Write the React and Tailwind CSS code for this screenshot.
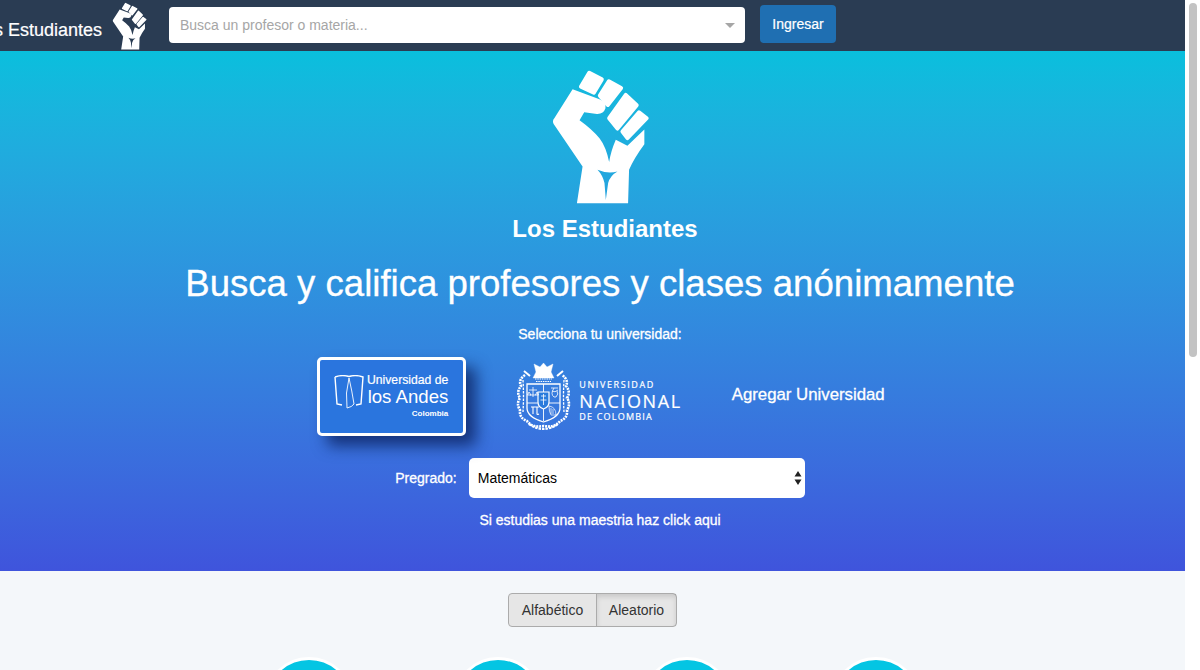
const FIST = "M215 103 L296 133 Q318 142 314 160 Q308 178 288 177 L250 172 L236 196 Q272 222 296 250 Q316 276 325 322 Q330 290 345 255 L380 273 L431 224 L431 268 Q400 310 385 345 L382 446 L228 446 L245 335 L158 207 Q153 198 160 190 Z M290 345 Q320 358 350 350 Q328 362 322 385 L315 436 L311 385 Q306 362 290 345 Z";

function Fist({ className }) {
  return (
    <svg viewBox="150 40 298 410" className={className} fill="white">
      <path d={FIST} fillRule="evenodd" />
      <g stroke="white" strokeWidth="12" strokeLinejoin="round">
        <polygon points="265,53 303,73 279,113 240,95" />
        <polygon points="324,79 361,99 321,150 297,122" />
        <polygon points="375,120 408,151 350,221 325,190" />
        <polygon points="415,172 438,190 380,250 365,230" />
      </g>
    </svg>
  );
}

function Crest() {
  return (
    <svg viewBox="0 0 55 70" className="w-[55px] h-[70px] shrink-0" fill="none" stroke="white">
      <path d="M27.5 1 L31 5 L37 2 L35 10 L38 16 H17 L20 10 L18 2 L24 5 Z" fill="white" strokeWidth="0.4" />
      <path d="M19 17 H36 M20 19.5 H35" strokeWidth="1.2" strokeDasharray="1.5 0.8" />
      <path d="M11 22 H44 V46 Q44 55 27.5 60 Q11 55 11 46 Z" strokeWidth="1.3" />
      <path d="M27.5 22 V59 M11 41 H44" strokeWidth="0.9" />
      <path d="M22 30 H33 V40 Q33 45 27.5 47 Q22 45 22 40 Z" fill="#2a7bdc" strokeWidth="1.2" />
      <path d="M25 34 H30 M27.5 32 V43 M24.5 38 H30.5" strokeWidth="0.8" />
      <path d="M13 28 H21 M17 25 V35 M14 33 H20 M13 30 L11.5 33 H15 Z M21 30 L19.5 33 H22.5 Z" strokeWidth="0.8" />
      <path d="M35 26 H42 M38 26 Q34 32 38 35 H40 Q43 32 41 29 M36 29 Q39 31 42 28" strokeWidth="0.8" />
      <path d="M15 45 H23 M17 45 V52 M21 45 V52 Q21 53 23 52" strokeWidth="1.1" />
      <path d="M33 44 Q40 45 40 53 H35 Q33 50 33 44 Z M35 46 V52 M37 47 V52" strokeWidth="0.7" />
      <path d="M9 13 Q2 18 5 24 Q0 30 4 36 Q0 42 4 48 Q3 56 11 59 Q16 66 27.5 64 Q39 66 44 59 Q52 56 51 48 Q55 42 51 36 Q55 30 50 24 Q53 18 46 13" strokeWidth="2.6" strokeDasharray="2 0.9" />
      <path d="M7 18 Q8 34 7 50 M48 18 Q47 34 48 50" strokeWidth="1.3" strokeDasharray="2.5 1.2" />
      <path d="M13 62 Q27.5 72 42 62" strokeWidth="2.2" strokeDasharray="2.5 1" />
      <path d="M8 9 L14 14 M47 9 L41 14" strokeWidth="2" />
    </svg>
  );
}

function Avatar() {
  return <div className="w-[90px] h-[90px] rounded-full bg-[#04c5e3] border-[3px] border-white shrink-0" />;
}

export default function App() {
  return (
    <div className="w-[1200px] h-[670px] overflow-hidden flex font-['Liberation_Sans',Arial,sans-serif]">
      <main className="w-[1185px] shrink-0 flex flex-col">
        <nav className="h-[51px] bg-[#2a3c53] flex items-start shrink-0 overflow-hidden">
          <span className="ml-[-26px] mt-[20px] text-white text-[18px] leading-[21px] whitespace-nowrap w-[129px] shrink-0 [-webkit-text-stroke:0.2px_white]">Los Estudiantes</span>
          <Fist className="w-[35px] h-[48px] mt-[2px] ml-[9px] shrink-0" />
          <div className="ml-[22px] mt-[7px] w-[576px] h-[36px] bg-white rounded-[4px] flex items-center justify-between pl-[11px] pr-[10px] shrink-0">
            <span className="text-[14px] text-[#a6a6a6]">Busca un profesor o materia...</span>
            <span className="w-0 h-0 border-x-[5px] border-x-transparent border-t-[5px] border-t-[#a6a6a6]" />
          </div>
          <button className="ml-[15px] mt-[5px] w-[76px] h-[38px] bg-[#1f6fb2] rounded-[4px] text-white text-[14px] [-webkit-text-stroke:0.2px_white] shrink-0">Ingresar</button>
        </nav>
        <section className="h-[520px] shrink-0 bg-gradient-to-b from-[#09bfdd] to-[#3f54dc] flex flex-col items-center text-white pl-[15px]">
          <Fist className="w-[99px] h-[137px] mt-[17px]" />
          <h2 className="ml-[10px] mt-[10px] text-[24px] leading-[28px] font-bold">Los Estudiantes</h2>
          <h1 className="mt-[21px] text-[36.6px] leading-[40px] whitespace-nowrap [-webkit-text-stroke:0.3px_white]">Busca y califica profesores y clases anónimamente</h1>
          <p className="mt-[20px] text-[14px] leading-[20px] [-webkit-text-stroke:0.3px_white]">Selecciona tu universidad:</p>
          <div className="mt-[13px] ml-[2px] flex items-center h-[79px]">
            <div className="w-[149px] h-[79px] rounded-[5px] border-[3px] border-white bg-[#2a75de] shadow-[10px_10px_15px_rgba(10,30,90,0.75)] flex flex-col items-end pr-[15px] pt-[13px] relative">
              <svg viewBox="0 0 30 34" className="absolute left-[14px] top-[15px] w-[30px] h-[34px]" fill="none" stroke="white" strokeWidth="1.4">
                <path d="M1 2 Q8 -0.5 15 1.5 Q22 -0.5 29 2 L27 29 L22 30 M1 2 L3 29 L8 30" />
                <path d="M15 3 Q11 18 13 33 Q18 32 20 29 Q18 16 15 3 Z" strokeWidth="0.9" />
              </svg>
              <span className="text-[12.2px] leading-[14px] text-white whitespace-nowrap [-webkit-text-stroke:0.2px_white]">Universidad de</span>
              <span className="text-[18.6px] leading-[20px] text-white whitespace-nowrap">los Andes</span>
              <span className="text-[8px] leading-[14px] font-bold text-white">Colombia</span>
            </div>
            <div className="ml-[50px] flex items-center gap-[8px]">
              <Crest />
              <div className="mt-[8px] flex flex-col text-white whitespace-nowrap font-['Open_Sans',sans-serif] [-webkit-text-stroke:0.2px_white]">
                <span className="text-[9px] leading-[14px] tracking-[1.6px]">UNIVERSIDAD</span>
                <span className="text-[18px] leading-[18px] tracking-[1.6px]">NACIONAL</span>
                <span className="text-[9px] leading-[14px] tracking-[1.2px]">DE COLOMBIA</span>
              </div>
            </div>
            <span className="ml-[50px] text-[16.8px] leading-[20px] mb-[3px] whitespace-nowrap [-webkit-text-stroke:0.3px_white]">Agregar Universidad</span>
          </div>
          <div className="mt-[22px] flex items-center">
            <label className="text-[14px] mr-[12px] [-webkit-text-stroke:0.3px_white]">Pregrado:</label>
            <div className="w-[336px] h-[40px] bg-white rounded-[5px] flex items-center justify-between pl-[9px] pr-[3px] text-black text-[14px]">
              <span>Matemáticas</span>
              <svg viewBox="0 0 8 16" className="w-[8px] h-[16px]" fill="#222"><path d="M4 1 L7.5 6.5 H0.5 Z M4 15 L7.5 9.5 H0.5 Z" /></svg>
            </div>
          </div>
          <a className="mt-[12px] text-[14px] leading-[20px] [-webkit-text-stroke:0.3px_white]">Si estudias una maestria haz click aqui</a>
        </section>
        <section className="grow bg-[#f4f7fa] flex flex-col items-center">
          <div className="mt-[22px] flex h-[34px] rounded-[4px] border border-[#ababab] bg-[#e6e6e6] text-[14px] text-[#333] shrink-0">
            <button className="w-[88px] border-r border-[#ababab]">Alfabético</button>
            <button className="w-[79px] shadow-[inset_0_3px_5px_rgba(0,0,0,0.125)]">Aleatorio</button>
          </div>
          <div className="mt-[30px] flex gap-[99px] shrink-0">
            <Avatar /><Avatar /><Avatar /><Avatar />
          </div>
        </section>
      </main>
      <aside className="w-[15px] shrink-0 bg-white pl-[4px] pr-[3px] pt-[3px]">
        <div className="h-[354px] rounded-full bg-[#c3c3c3]" />
      </aside>
    </div>
  );
}
